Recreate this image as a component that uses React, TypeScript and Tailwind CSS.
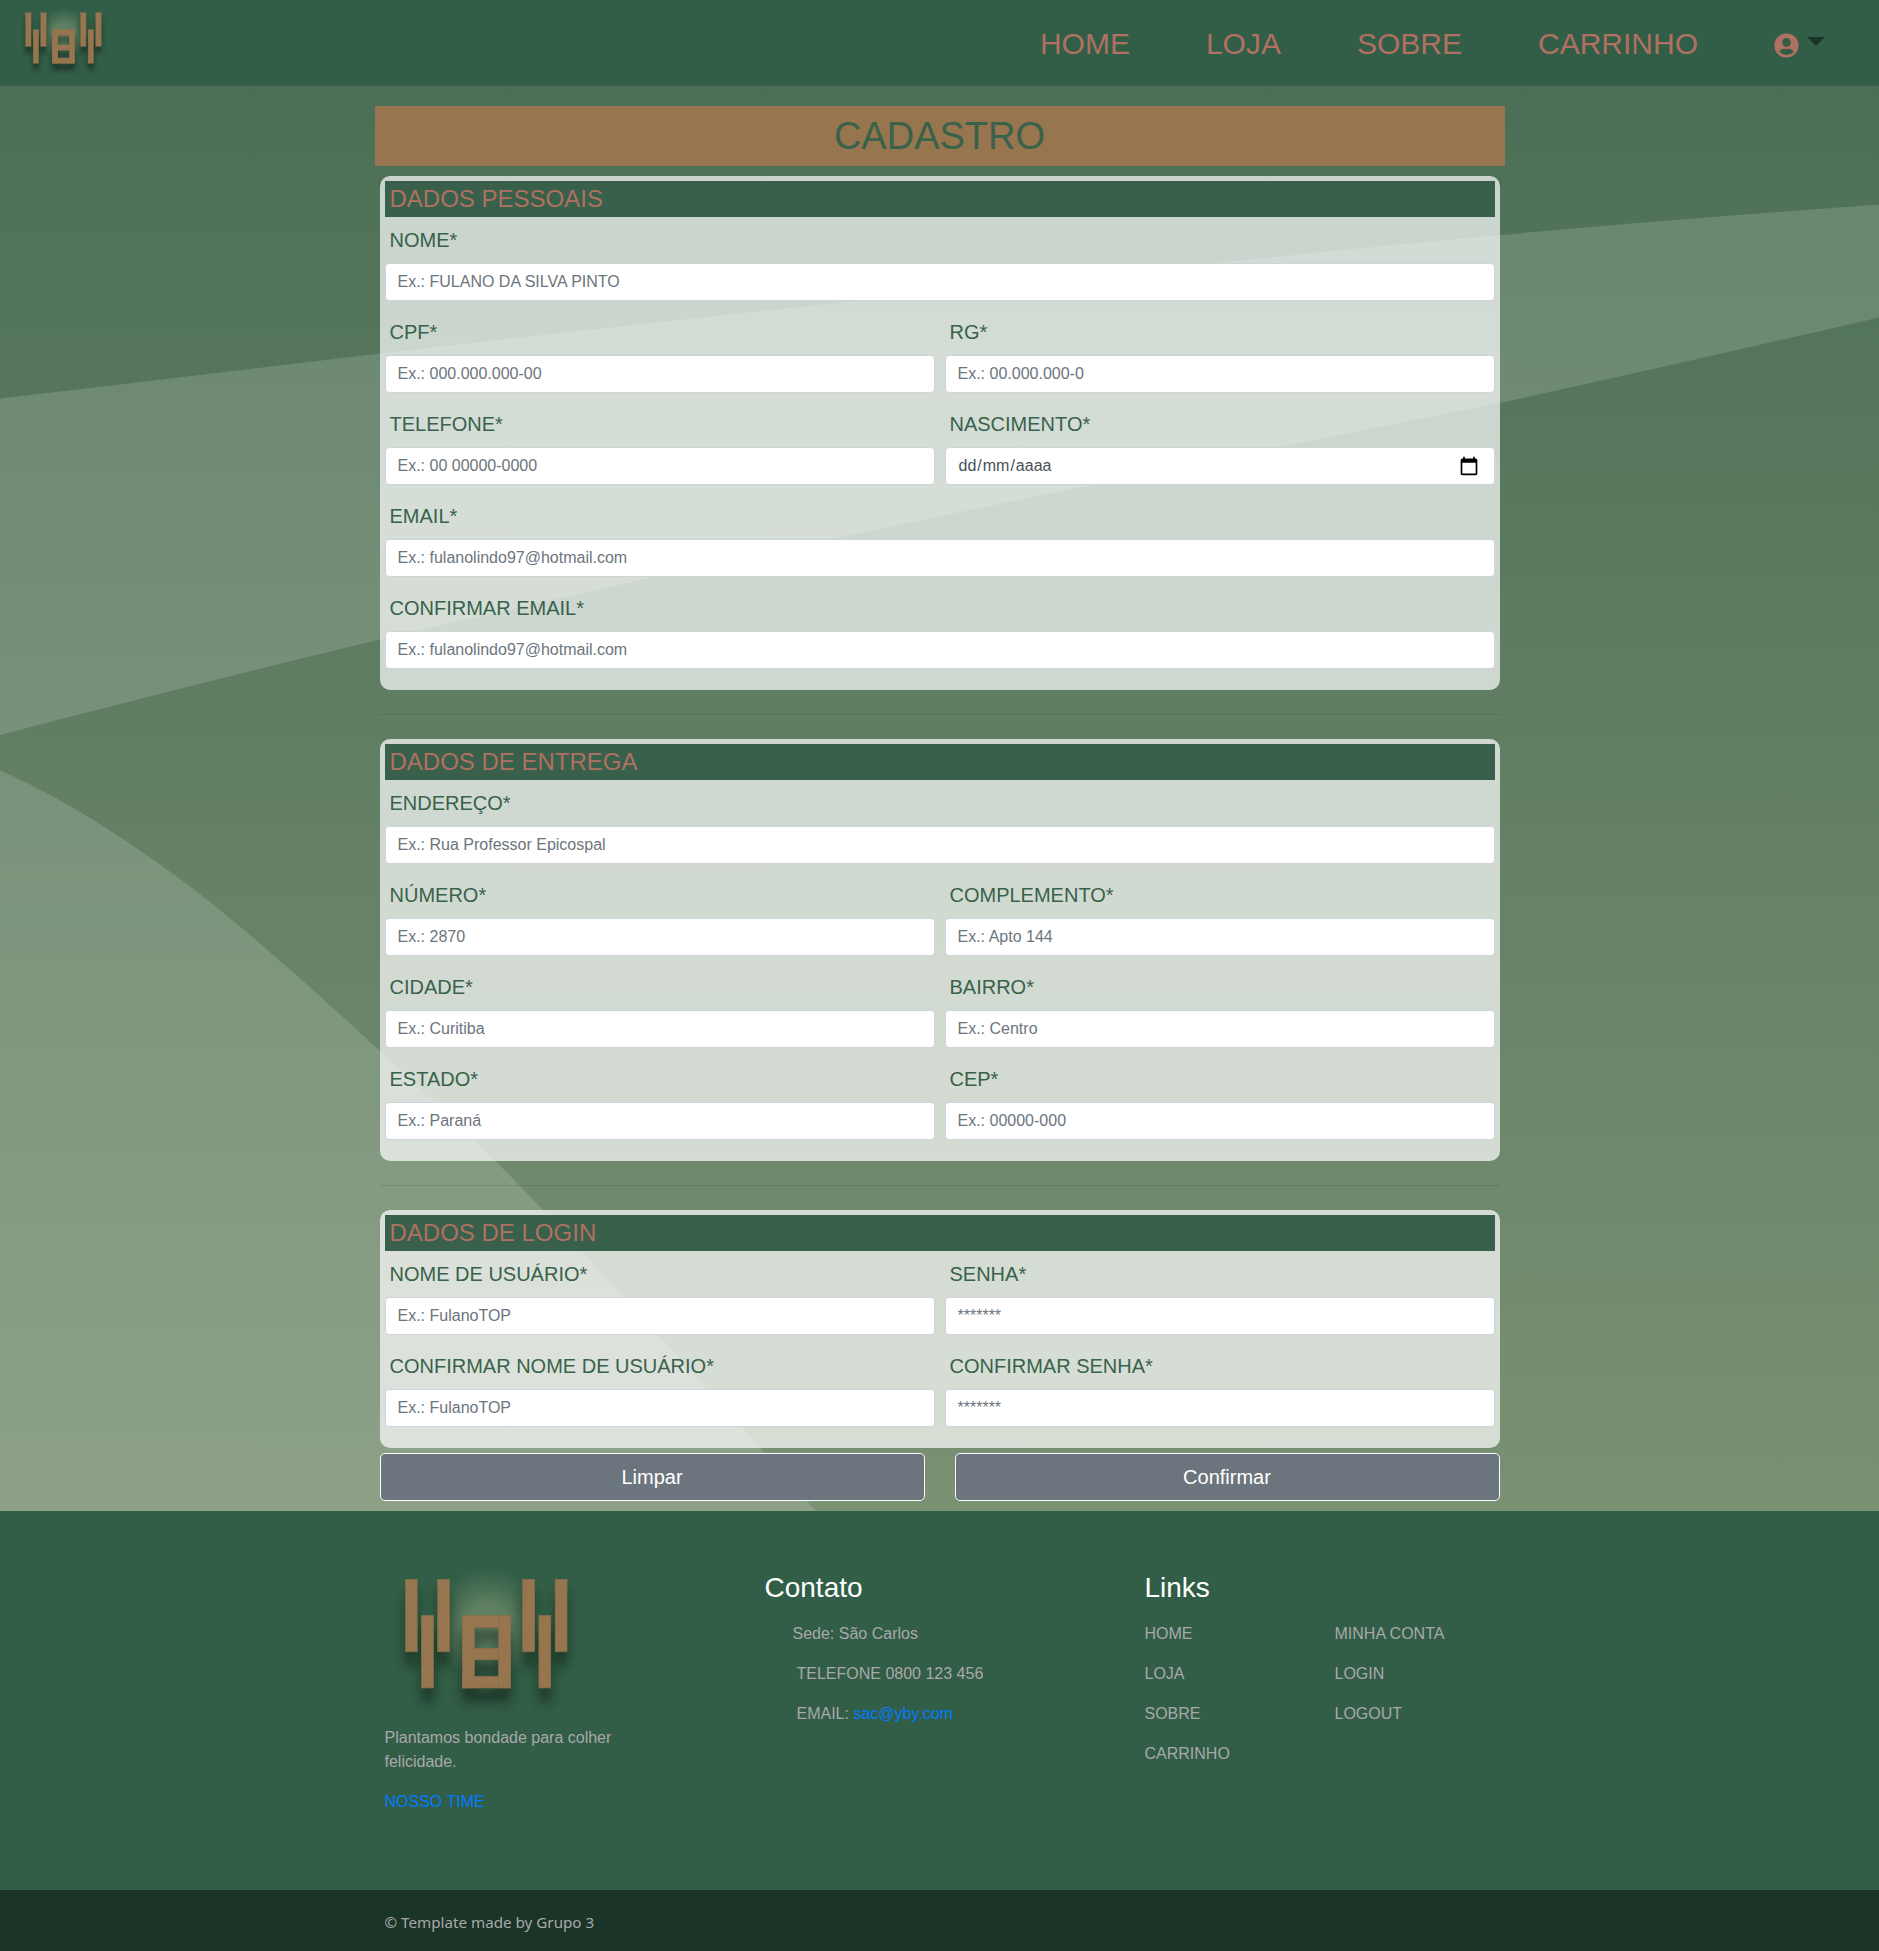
import React from "react";
import { FaUserCircle } from "react-icons/fa";

type FieldProps = { label: string; placeholder: string; date?: boolean };

const BARS: [number, number, number, number][] = [
  [35.4, 39.4, 11.8, 72.3],
  [51.6, 75.6, 11.8, 72.3],
  [67.7, 39.4, 11.8, 72.3],
  [92.4, 75.6, 11.8, 72.3],
  [92.4, 75.6, 48, 11.8],
  [92.4, 108.4, 48, 11.2],
  [92.4, 136.4, 48, 11.5],
  [128.7, 75.6, 11.8, 72.3],
  [152.7, 39.4, 11.8, 72.3],
  [168.9, 75.6, 11.8, 72.3],
  [185.2, 39.4, 11.8, 72.3],
];

function Logo({ className, id }: { className: string; id: string }) {
  return (
    <svg className={className} viewBox="15 25 205 150" preserveAspectRatio="none" overflow="visible">
      <defs>
        <radialGradient id={id + "-glow"} cx="117" cy="84" r="56" gradientUnits="userSpaceOnUse">
          <stop offset="0" stopColor="#9aa582" stopOpacity="0.45" />
          <stop offset="0.4" stopColor="#8ea37d" stopOpacity="0.36" />
          <stop offset="0.75" stopColor="#7c9672" stopOpacity="0.16" />
          <stop offset="1" stopColor="#6c8d6a" stopOpacity="0" />
        </radialGradient>
        <filter id={id + "-shade"} x="-20%" y="-20%" width="140%" height="150%">
          <feGaussianBlur stdDeviation="6" />
        </filter>
      </defs>
      <ellipse cx="117" cy="84" rx="56" ry="56" fill={"url(#" + id + "-glow)"} />
      <g filter={"url(#" + id + "-shade)"} opacity="0.75" transform="translate(0 14)" fill="#16261d">
        {BARS.map(([x, y, w, h], i) => (
          <rect key={i} x={x} y={y} width={w} height={h} />
        ))}
      </g>
      <ellipse cx="117" cy="84" rx="56" ry="56" fill={"url(#" + id + "-glow)"} opacity="0.4" />
      <g fill="#96754f">
        {BARS.map(([x, y, w, h], i) => (
          <rect key={i} x={x} y={y} width={w} height={h} stroke="#84704b" strokeWidth="0.8" />
        ))}
        <rect x="92.8" y="76" width="11.4" height="71.5" />
        <rect x="92.8" y="76" width="35.4" height="11" />
        <rect x="92.8" y="108.8" width="35.4" height="10.4" />
        <rect x="92.8" y="136.8" width="35.4" height="10.7" />
      </g>
    </svg>
  );
}

function Field({ label, placeholder, date }: FieldProps) {
  return (
    <div className="mb-4 min-w-0 flex-1">
      <label className="mb-2 block pl-[5px] text-[20px] leading-[30px] text-[#38624a]">{label}</label>
      {date ? (
        <div className="flex h-[38px] items-center justify-between rounded border border-[#ced4da] bg-white pr-[15px] pl-3 text-base leading-6 text-[#495057]">
          <span className="flex">
            <span className="px-px">dd</span>
            <span>/</span>
            <span className="px-px">mm</span>
            <span>/</span>
            <span className="px-px">aaaa</span>
          </span>
          <svg className="mb-px h-5 w-5" viewBox="0 0 24 24" fill="#000">
            <path d="M20 3h-1V1h-2v2H7V1H5v2H4c-1.1 0-2 .9-2 2v16c0 1.1.9 2 2 2h16c1.1 0 2-.9 2-2V5c0-1.1-.9-2-2-2zm0 18H4V8h16v13z" />
          </svg>
        </div>
      ) : (
        <input
          className="block h-[38px] w-full rounded border border-[#ced4da] bg-white px-3 text-base leading-6 text-[#495057] placeholder:text-[#6c757d]"
          placeholder={placeholder}
        />
      )}
    </div>
  );
}

function Section({ title, rows }: { title: string; rows: FieldProps[][] }) {
  return (
    <section className="rounded-[10px] bg-white/70 p-[5px]">
      <h2 className="mb-2 h-9 bg-[#38604a] pl-[5px] text-2xl leading-9 text-[#b07062]">{title}</h2>
      {rows.map((row, i) => (
        <div key={i} className="flex gap-[10px]">
          {row.map((f) => (
            <Field key={f.label} {...f} />
          ))}
        </div>
      ))}
    </section>
  );
}

const PESSOAIS: FieldProps[][] = [
  [{ label: "NOME*", placeholder: "Ex.: FULANO DA SILVA PINTO" }],
  [
    { label: "CPF*", placeholder: "Ex.: 000.000.000-00" },
    { label: "RG*", placeholder: "Ex.: 00.000.000-0" },
  ],
  [
    { label: "TELEFONE*", placeholder: "Ex.: 00 00000-0000" },
    { label: "NASCIMENTO*", placeholder: "dd/mm/aaaa", date: true },
  ],
  [{ label: "EMAIL*", placeholder: "Ex.: fulanolindo97@hotmail.com" }],
  [{ label: "CONFIRMAR EMAIL*", placeholder: "Ex.: fulanolindo97@hotmail.com" }],
];

const ENTREGA: FieldProps[][] = [
  [{ label: "ENDEREÇO*", placeholder: "Ex.: Rua Professor Epicospal" }],
  [
    { label: "NÚMERO*", placeholder: "Ex.: 2870" },
    { label: "COMPLEMENTO*", placeholder: "Ex.: Apto 144" },
  ],
  [
    { label: "CIDADE*", placeholder: "Ex.: Curitiba" },
    { label: "BAIRRO*", placeholder: "Ex.: Centro" },
  ],
  [
    { label: "ESTADO*", placeholder: "Ex.: Paraná" },
    { label: "CEP*", placeholder: "Ex.: 00000-000" },
  ],
];

const LOGIN: FieldProps[][] = [
  [
    { label: "NOME DE USUÁRIO*", placeholder: "Ex.: FulanoTOP" },
    { label: "SENHA*", placeholder: "*******" },
  ],
  [
    { label: "CONFIRMAR NOME DE USUÁRIO*", placeholder: "Ex.: FulanoTOP" },
    { label: "CONFIRMAR SENHA*", placeholder: "*******" },
  ],
];

function Waves() {
  return (
    <svg className="absolute inset-0 h-full w-full" viewBox="0 86 1879 1425" preserveAspectRatio="none">
      <g fill="#fff" fillOpacity="0.15">
        <path d="M0 398.5C127 383.5 253 368.5 380 353.5C660 321 940 292 1219 262.6C1312 253 1406 243.5 1500 235C1626 223.5 1752 213.5 1879 204.5V317.5C1752 347 1626 375 1500 403C1430 417 1359 431 1288 445.5C1134 477 980 507 827 540C678 572 529 604 380 639.5C253 670 127 702 0 735Z" />
        <path d="M0 770.6C64 798 127 840 191 887C254 936 317 993 380 1051C435 1102 490 1154 545 1212C635 1308 726 1408 816 1511H0Z" />
      </g>
    </svg>
  );
}

export default function App() {
  return (
    <div className="flex h-[1951px] w-full flex-col overflow-hidden bg-[#325e47] font-['Liberation_Sans',Arial,sans-serif]">
      <nav className="flex h-[86px] shrink-0 items-center justify-between bg-[#325e47] pr-[54px] pl-4">
        <Logo id="nav" className="-mt-[5px] h-[70px] w-[96px]" />
        <div className="mt-px flex items-center gap-[76px] text-[30px] leading-[45px] text-[#b07062]">
          <a>HOME</a>
          <a>LOJA</a>
          <a>SOBRE</a>
          <a>CARRINHO</a>
          <div className="flex gap-2">
            <FaUserCircle className="mt-[4px] h-[25px] w-[25px]" />
            <span className="mt-[8px] h-0 w-0 border-x-[9px] border-t-[9px] border-x-transparent border-t-[#1b3428]" />
          </div>
        </div>
      </nav>

      <main className="relative h-[1425px] shrink-0 bg-linear-to-b from-[#4b6f56] via-[#607e63] via-45% to-[#7a9173] pt-5">
        <Waves />
        <div className="relative mx-auto w-[1130px]">
          <h1 className="h-[60px] bg-[#96754f] text-center text-[38px] leading-[60px] text-[#38624a]">CADASTRO</h1>
          <form className="px-[5px] pt-[10px]">
            <Section title="DADOS PESSOAIS" rows={PESSOAIS} />
            <hr className="my-6 border-black/10" />
            <Section title="DADOS DE ENTREGA" rows={ENTREGA} />
            <hr className="my-6 border-black/10" />
            <Section title="DADOS DE LOGIN" rows={LOGIN} />
            <div className="mt-[5px] flex gap-[30px]">
              <button type="button" className="h-12 flex-1 rounded-[5px] border border-white bg-[#6c757d] text-[20px] leading-[30px] text-white">
                Limpar
              </button>
              <button type="button" className="h-12 flex-1 rounded-[5px] border border-white bg-[#6c757d] text-[20px] leading-[30px] text-white">
                Confirmar
              </button>
            </div>
          </form>
        </div>
      </main>

      <footer className="flex flex-1 flex-col text-base leading-6 text-[#a9a9a9]">
        <div className="mx-auto flex h-[379px] w-[1110px] pt-[54px]">
          <div className="w-[380px]">
            <Logo id="foot" className="h-[150px] w-[205px]" />
            <p className="mt-[11px] w-[250px]">Plantamos bondade para colher felicidade.</p>
            <a className="mt-4 block text-[#007bff]">NOSSO TIME</a>
          </div>
          <div className="w-[380px] pt-[6px]">
            <h3 className="text-[28px] leading-[34px] text-white">Contato</h3>
            <ul className="mt-[17px] flex flex-col gap-4">
              <li className="pl-7">Sede: São Carlos</li>
              <li className="pl-8">TELEFONE 0800 123 456</li>
              <li className="pl-8">
                EMAIL: <a className="text-[#007bff]">sac@yby.com</a>
              </li>
            </ul>
          </div>
          <div className="flex-1 pt-[6px]">
            <h3 className="text-[28px] leading-[34px] text-white">Links</h3>
            <div className="mt-[17px] flex">
              <ul className="flex w-[190px] flex-col gap-4">
                <li>HOME</li>
                <li>LOJA</li>
                <li>SOBRE</li>
                <li>CARRINHO</li>
              </ul>
              <ul className="flex flex-col gap-4">
                <li>MINHA CONTA</li>
                <li>LOGIN</li>
                <li>LOGOUT</li>
              </ul>
            </div>
          </div>
        </div>
        <div className="flex-1 bg-[#1b3428]">
          <p className="mx-auto w-[1110px] pt-5 font-['Noto_Sans',sans-serif] text-[15.2px]">© Template made by Grupo 3</p>
        </div>
      </footer>
    </div>
  );
}
